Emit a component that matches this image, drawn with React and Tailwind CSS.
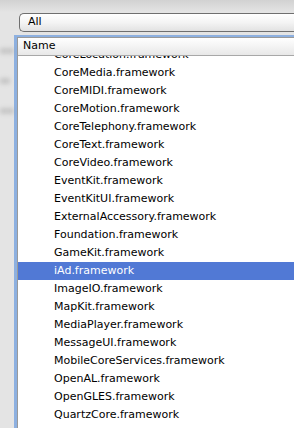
import React from "react";

const frameworks = [
  "CoreLocation",
  "CoreMedia",
  "CoreMIDI",
  "CoreMotion",
  "CoreTelephony",
  "CoreText",
  "CoreVideo",
  "EventKit",
  "EventKitUI",
  "ExternalAccessory",
  "Foundation",
  "GameKit",
  "iAd",
  "ImageIO",
  "MapKit",
  "MediaPlayer",
  "MessageUI",
  "MobileCoreServices",
  "OpenAL",
  "OpenGLES",
  "QuartzCore",
  "Security",
];

function App() {
  const selected = "iAd";

  return (
    <div
      className="relative w-[294px] h-[428px] overflow-hidden bg-[#e4e4e4] text-[11px] text-black"
      style={{ fontFamily: '"DejaVu Sans", Verdana, sans-serif' }}
    >
      {/* blurred stuff behind the sheet */}
      <div className="absolute left-0 top-[48px] w-[16px] flex flex-col gap-[24px] blur-[2px] opacity-40">
        <div className="h-[6px] w-[14px] bg-[#9a9a9a]" />
        <div className="h-[6px] w-[10px] bg-[#9a9a9a]" />
        <div className="h-[6px] w-[14px] bg-[#9a9a9a]" />
      </div>

      <div className="h-[12px] bg-gradient-to-b from-[#d2d2d2] to-[#e4e4e4]" />

      {/* popup */}
      <div className="ml-[19px] mt-[1px] h-[19px] flex items-center pl-[8px] rounded-l-[5px] border border-r-0 border-[#6f6f6f] bg-gradient-to-b from-white via-[#f4f4f4] to-[#e2e2e2]">
        All
      </div>

      {/* table */}
      <div className="mt-[3px] ml-[14px] border-l-[3px] border-t-[2px] border-[#8db0e0] h-[400px]">
        <div className="border-l border-t border-[#9a9a9a] h-full bg-white flex flex-col">
          <div className="h-[18px] flex items-center pl-[5px] border-b border-[#a8a8a8] bg-gradient-to-b from-white to-[#e8e8e8]">
            Name
          </div>
          <div className="flex-1 overflow-hidden">
            <div className="-mt-[10px]">
              {frameworks.map((name) => (
                <div
                  key={name}
                  className={
                    name === selected
                      ? "h-[18px] flex items-center pl-[36px] bg-[#5179d5] text-white"
                      : "h-[18px] flex items-center pl-[36px]"
                  }
                >
                  {name}.framework
                </div>
              ))}
            </div>
          </div>
        </div>
      </div>
    </div>
  );
}

export default App;
